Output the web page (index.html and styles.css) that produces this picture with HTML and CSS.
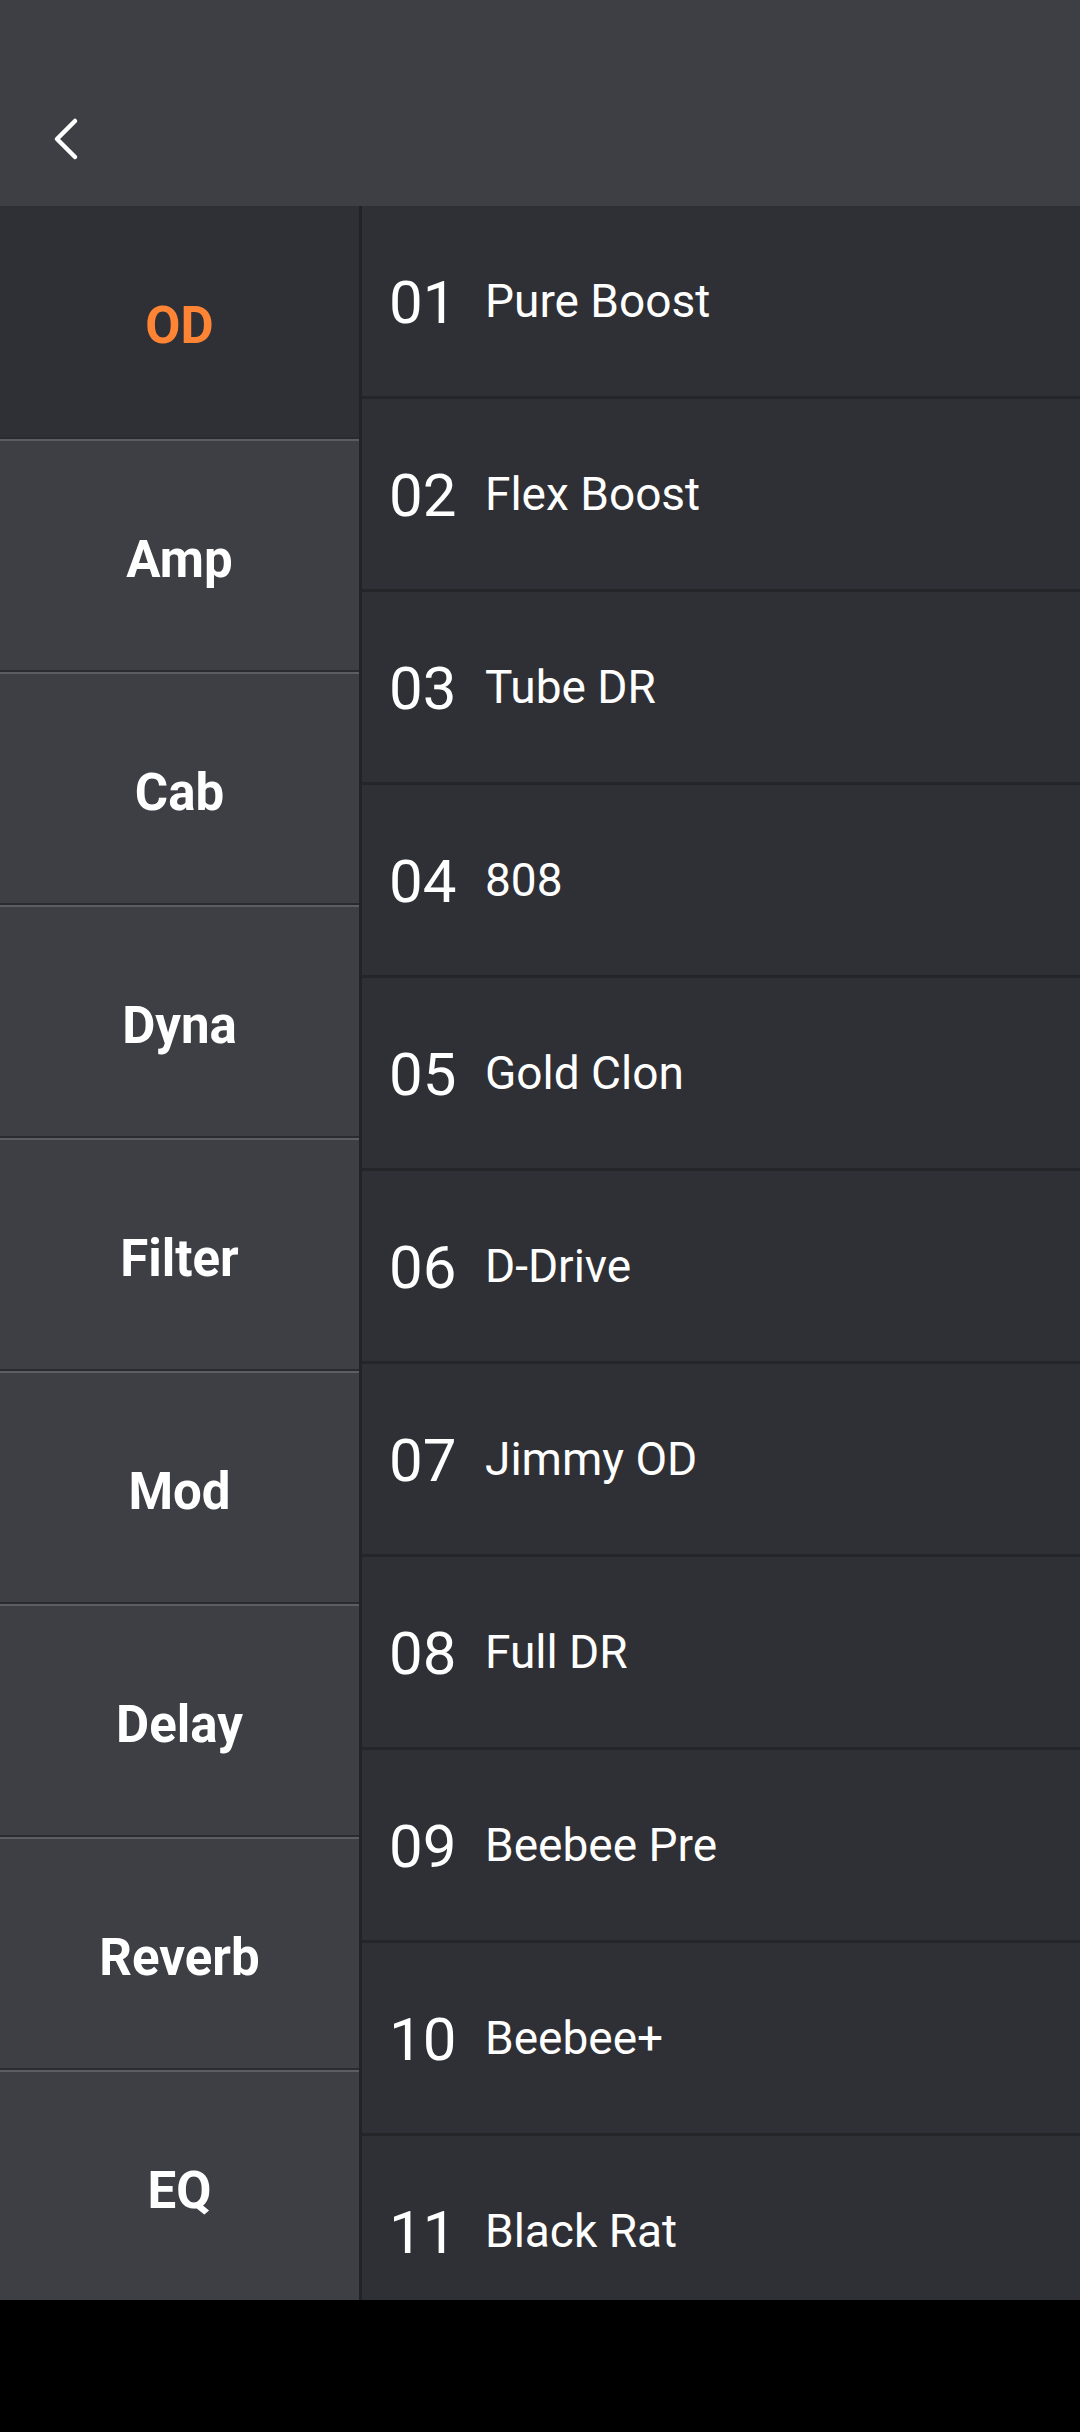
FILE: index.html
```html
<!DOCTYPE html>
<html>
<head>
<meta charset="utf-8">
<link rel="stylesheet" href="styles.css">
</head>
<body>
<div class="app">
  <header class="topbar">
    <button class="back" aria-label="Back">
      <svg width="30" height="44" viewBox="0 0 30 44"><path d="M22 4 L4 22 L22 40" fill="none" stroke="#fff" stroke-width="4.5" stroke-linecap="round" stroke-linejoin="round"/></svg>
    </button>
  </header>
  <main class="content">
    <nav class="cats">
      <div class="cat active">OD</div>
      <div class="cat">Amp</div>
      <div class="cat">Cab</div>
      <div class="cat">Dyna</div>
      <div class="cat">Filter</div>
      <div class="cat">Mod</div>
      <div class="cat">Delay</div>
      <div class="cat">Reverb</div>
      <div class="cat">EQ</div>
    </nav>
    <section class="list">
      <div class="row"><span class="num">01</span><span class="name">Pure Boost</span></div>
      <div class="row"><span class="num">02</span><span class="name">Flex Boost</span></div>
      <div class="row"><span class="num">03</span><span class="name">Tube DR</span></div>
      <div class="row"><span class="num">04</span><span class="name">808</span></div>
      <div class="row"><span class="num">05</span><span class="name">Gold Clon</span></div>
      <div class="row"><span class="num">06</span><span class="name">D-Drive</span></div>
      <div class="row"><span class="num">07</span><span class="name">Jimmy OD</span></div>
      <div class="row"><span class="num">08</span><span class="name">Full DR</span></div>
      <div class="row"><span class="num">09</span><span class="name">Beebee Pre</span></div>
      <div class="row"><span class="num">10</span><span class="name">Beebee+</span></div>
      <div class="row"><span class="num">11</span><span class="name">Black Rat</span></div>
    </section>
  </main>
</div>
</body>
</html>
```

FILE: styles.css
```css
html, body {
  margin: 0;
  padding: 0;
  background: #000;
  font-family: Roboto, "Noto Sans", "Liberation Sans", sans-serif;
}
.app {
  width: 1080px;
  height: 2300px;
  display: flex;
  flex-direction: column;
}
.topbar {
  height: 206px;
  flex: none;
  background: #3e3f45;
  display: flex;
  align-items: center;
  padding-left: 53px;
  box-sizing: border-box;
}
.back {
  background: none;
  border: 0;
  padding: 0;
  margin-top: 72px;
  display: flex;
}
.content {
  flex: 1;
  display: flex;
  min-height: 0;
}
.cats {
  width: 359px;
  flex: none;
  display: flex;
  flex-direction: column;
  overflow: hidden;
  border-right: 3px solid #222327;
}
.cat {
  height: 233px;
  flex: none;
  box-sizing: border-box;
  display: flex;
  align-items: center;
  justify-content: center;
  background: #3e3f45;
  border-top: 2px solid #5c5d62;
  border-bottom: 2px solid #2a2b30;
  color: #fff;
  font-weight: 700;
  font-size: 51px;
  padding-top: 8px;
}
.cat.active {
  background: #2f3036;
  border-top: 0;
  color: #ff8534;
}
.list {
  flex: 1;
  overflow: hidden;
  background: #2f3036;
}
.row {
  height: 190px;
  border-bottom: 3px solid #242529;
  display: flex;
  align-items: center;
  padding-left: 27px;
  color: #fff;
}
.num {
  width: 96px;
  font-size: 60px;
  font-weight: 400;
  padding-top: 2px;
}
.name {
  font-size: 46px;
  font-weight: 400;
}
```
